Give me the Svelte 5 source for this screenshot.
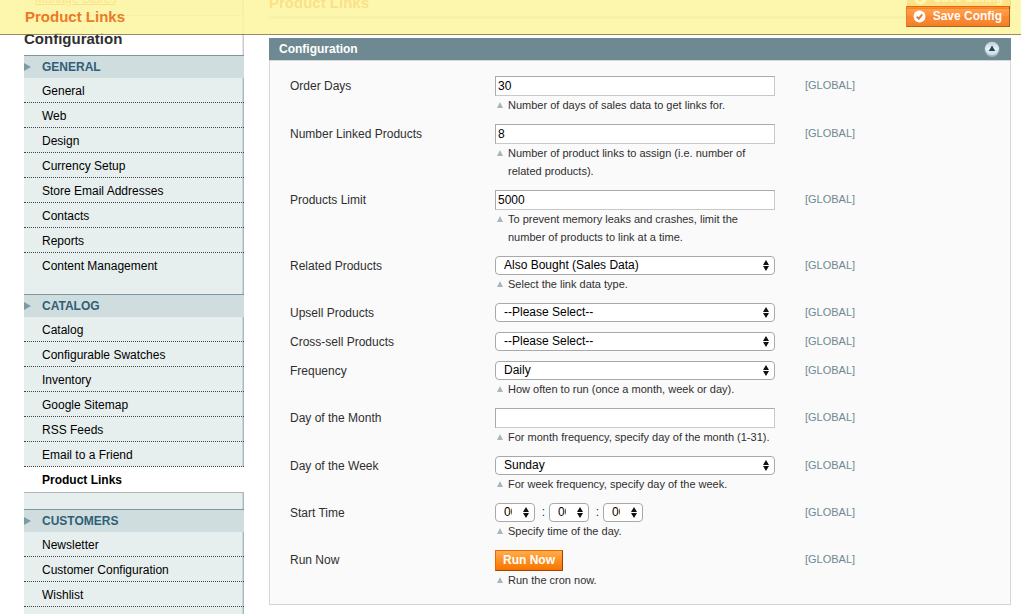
<script lang="ts">
  const groups = [
    {
      title: 'General',
      items: ['General', 'Web', 'Design', 'Currency Setup', 'Store Email Addresses', 'Contacts', 'Reports', 'Content Management'],
    },
    {
      title: 'Catalog',
      items: ['Catalog', 'Configurable Swatches', 'Inventory', 'Google Sitemap', 'RSS Feeds', 'Email to a Friend', 'Product Links'],
    },
    { title: 'Customers', items: ['Newsletter', 'Customer Configuration', 'Wishlist'] },
  ];
  const active = 'Product Links';

  const fields = [
    { id: 'order_days', label: 'Order Days', type: 'text', value: '30', note: 'Number of days of sales data to get links for.' },
    { id: 'number_linked', label: 'Number Linked Products', type: 'text', value: '8', note: 'Number of product links to assign (i.e. number of related products).' },
    { id: 'products_limit', label: 'Products Limit', type: 'text', value: '5000', note: 'To prevent memory leaks and crashes, limit the number of products to link at a time.' },
    { id: 'related', label: 'Related Products', type: 'select', value: 'Also Bought (Sales Data)', note: 'Select the link data type.' },
    { id: 'upsell', label: 'Upsell Products', type: 'select', value: '--Please Select--', note: '' },
    { id: 'crosssell', label: 'Cross-sell Products', type: 'select', value: '--Please Select--', note: '' },
    { id: 'frequency', label: 'Frequency', type: 'select', value: 'Daily', note: 'How often to run (once a month, week or day).' },
    { id: 'day_month', label: 'Day of the Month', type: 'text', value: '', note: 'For month frequency, specify day of the month (1-31).' },
    { id: 'day_week', label: 'Day of the Week', type: 'select', value: 'Sunday', note: 'For week frequency, specify day of the week.' },
    { id: 'start_time', label: 'Start Time', type: 'time', value: '00', note: 'Specify time of the day.' },
    { id: 'run_now', label: 'Run Now', type: 'button', value: 'Run Now', note: 'Run the cron now.' },
  ];
  const timeParts = ['Hours', 'Minutes', 'Seconds'];
</script>

{#snippet dropdown(id: string, value: string, name: string | undefined)}
  <span class="dropdown">
    <select {id} aria-label={name}><option>{value}</option></select>
    <svg width="6" height="11" viewBox="0 0 6 11" aria-hidden="true"><path d="M3 0 6 5H0zM3 11 0 6h6z" fill="#111" /></svg>
  </span>
{/snippet}

{#snippet saveButton()}
  <button type="button" class="action save">
    <svg width="13" height="13" viewBox="0 0 13 13" aria-hidden="true">
      <circle cx="6.5" cy="6.5" r="6" fill="#fff" />
      <path d="M3.8 6.6 5.8 8.8 9.2 4.4" fill="none" stroke="#e0651a" stroke-width="1.8" />
    </svg>
    Save Config
  </button>
{/snippet}

<div class="floating">
  <h2>Product Links</h2>
  {@render saveButton()}
</div>

<div class="page">
  <aside>
    <div class="scope-box"><a href="#stores">Manage Stores</a></div>
    <h3>Configuration</h3>
    <nav>
      {#each groups as group}
        <section>
          <h4>
            <svg width="7" height="8" viewBox="0 0 7 8" aria-hidden="true"><path d="M0 0 7 4 0 8z" fill="#7b9ba6" /></svg>
            {group.title}
          </h4>
          <ul>
            {#each group.items as item}
              <li class:active={item === active}><a href="#section">{item}</a></li>
            {/each}
          </ul>
        </section>
      {/each}
    </nav>
  </aside>

  <main>
    <header>
      <h2>Product Links</h2>
      {@render saveButton()}
    </header>

    <div class="bar">
      <h3>Configuration</h3>
      <button type="button" class="toggle" aria-label="Collapse section">
        <svg width="16" height="16" viewBox="0 0 16 16" aria-hidden="true">
          <defs>
            <linearGradient id="knob" x1="0" y1="0" x2="0" y2="1">
              <stop offset="0" stop-color="#b9cdd3" />
              <stop offset=".5" stop-color="#e9f1f3" />
              <stop offset="1" stop-color="#c9d8dc" />
            </linearGradient>
          </defs>
          <circle cx="8" cy="8.5" r="7.5" fill="#a2b5bb" />
          <circle cx="8" cy="7.5" r="6.8" fill="url(#knob)" />
          <path d="M8 4.5 11.2 10H4.8z" fill="#164a61" />
        </svg>
      </button>
    </div>

    <form class="panel" onsubmit={(e) => e.preventDefault()}>
      {#each fields as f}
        <div class="row">
          <label for={f.id}>{f.label}</label>
          <div class="value">
            {#if f.type === 'text'}
              <input id={f.id} type="text" value={f.value} />
            {:else if f.type === 'select'}
              {@render dropdown(f.id, f.value, undefined)}
            {:else if f.type === 'time'}
              <div class="time">
                {#each timeParts as part, i}
                  {#if i > 0}<span class="colon">:</span>{/if}
                  {@render dropdown(i === 0 ? f.id : f.id + i, f.value, part)}
                {/each}
              </div>
            {:else}
              <button id={f.id} type="button" class="action">{f.value}</button>
            {/if}
            {#if f.note}
              <p>
                <svg width="6" height="6" viewBox="0 0 6 6" aria-hidden="true"><path d="M3 0 6 6H0z" fill="#a5b6bc" /></svg>
                <span>{f.note}</span>
              </p>
            {/if}
          </div>
          <span class="scope">[GLOBAL]</span>
        </div>
      {/each}
    </form>
  </main>
</div>

<style>
  :global(body) {
    background: #fff;
    color: #2f2f2f;
    font: 12px/18px 'Liberation Sans', Arial, Helvetica, sans-serif;
  }
  h2, h3, h4, p, ul {
    margin: 0;
    padding: 0;
  }
  input, select, button {
    box-sizing: border-box;
    margin: 0;
    font: inherit;
    color: #000;
  }
  a {
    color: inherit;
    text-decoration: none;
  }
  svg {
    display: block;
    flex: none;
  }
  h2 {
    color: #eb6400;
    font-size: 15px;
    line-height: 12px;
  }

  .floating {
    position: fixed;
    z-index: 1;
    top: 0;
    left: 0;
    right: 0;
    box-sizing: border-box;
    height: 35px;
    padding: 6px 11px 0 25px;
    display: flex;
    align-items: flex-start;
    justify-content: space-between;
    background: #fdf6a0;
    border-bottom: 1px solid #8a7440;
    opacity: 0.85;
  }
  .floating h2 {
    line-height: 22px;
  }

  .page {
    display: flex;
    gap: 25px;
    margin-top: -12px;
    min-height: calc(100vh + 12px);
    padding: 0 10px 0 24px;
    box-sizing: border-box;
  }
  aside {
    width: 220px;
    flex: none;
    display: flex;
    flex-direction: column;
  }
  .scope-box {
    box-sizing: border-box;
    height: 28px;
    padding: 2px 11px;
    background: #f4f4f4;
    border-right: 2px solid #ccc;
    border-bottom: 1px solid #ccc;
  }
  .scope-box a {
    color: #ea7601;
    font-size: 12px;
    text-decoration: underline;
  }
  aside h3 {
    padding: 14px 0 7px;
    font-size: 15px;
    line-height: 18px;
    background: linear-gradient(to left, #ccc 1px, #e4e4e4 1px 2px, #fff 2px);
  }
  nav {
    flex: 1;
    background: linear-gradient(to left, #a9babd 1px, #cad7d8 1px 2px, #e7efee 2px);
  }
  section {
    padding-bottom: 16px;
  }
  section:last-child {
    padding-bottom: 0;
  }
  h4 {
    display: flex;
    align-items: center;
    gap: 11px;
    border-top: 1px solid #7d97a1;
    background: #d0dddf;
    color: #2f5f77;
    font-size: 12px;
    line-height: 22px;
    text-transform: uppercase;
  }
  ul {
    list-style: none;
  }
  li {
    padding: 2px 0 0 18px;
    line-height: 22px;
    color: #000;
    border-bottom: 1px dotted #444;
  }
  li:last-child {
    border-bottom-color: transparent;
  }
  section:last-child li:last-child {
    border-bottom-color: #444;
  }
  li.active {
    padding-bottom: 1px;
    background: #fff;
    border-bottom: 1px solid #b0b5b6;
    font-weight: bold;
  }

  main {
    flex: 1;
    min-width: 0;
  }
  header {
    display: flex;
    align-items: flex-end;
    justify-content: space-between;
    margin-bottom: 19px;
    padding-bottom: 7px;
    border-bottom: 3px solid #dfdfdf;
  }
  .bar {
    display: flex;
    align-items: center;
    justify-content: space-between;
    height: 22px;
    padding: 0 11px 0 10px;
    background: #6f8992;
    color: #fff;
  }
  .bar h3 {
    font-size: 12px;
  }
  .toggle {
    padding: 0;
    border: 0;
    background: none;
  }
  .panel {
    padding: 10px 20px;
    background: #fafafa;
    border: 1px solid #d6d6d6;
  }
  .row {
    display: grid;
    grid-template-columns: 205px 280px 1fr;
    padding: 5px 0;
  }
  label {
    padding-top: 1px;
  }
  .scope {
    padding-left: 30px;
    color: #6f8992;
    font-size: 11px;
  }
  input {
    display: block;
    width: 100%;
    height: 20px;
    padding: 0 2px;
    border: 1px solid;
    border-color: #aaa #c8c8c8 #c8c8c8 #aaa;
    border-radius: 0;
    background: #fff;
  }
  .dropdown {
    display: grid;
    align-items: center;
  }
  .dropdown > * {
    grid-area: 1 / 1;
  }
  .dropdown svg {
    justify-self: end;
    margin-right: 6px;
    pointer-events: none;
  }
  select {
    appearance: none;
    width: 100%;
    height: 19px;
    padding: 0 22px 1px 8px;
    border: 1px solid #a9a9a9;
    border-radius: 4px;
    background: #fff;
    line-height: 16px;
  }
  .time {
    display: flex;
  }
  .time .dropdown {
    width: 40px;
  }
  .colon {
    width: 14px;
    padding-left: 3px;
    box-sizing: border-box;
    text-align: center;
  }
  p {
    display: flex;
    gap: 5px;
    padding-left: 2px;
    font-size: 11px;
  }
  p svg {
    margin-top: 6px;
  }
  .action {
    display: flex;
    align-items: center;
    gap: 7px;
    height: 21px;
    padding: 0 7px 1px;
    border: 1px solid;
    border-color: #ed6502 #a04300 #a04300 #ed6502;
    background: linear-gradient(#ffae4d, #ff9528 40%, #f77400);
    color: #fff;
    font-weight: bold;
    white-space: nowrap;
  }
  .save {
    padding-left: 6px;
    background: linear-gradient(#ff9638, #ff7a14 50%, #f06a04);
  }
</style>
